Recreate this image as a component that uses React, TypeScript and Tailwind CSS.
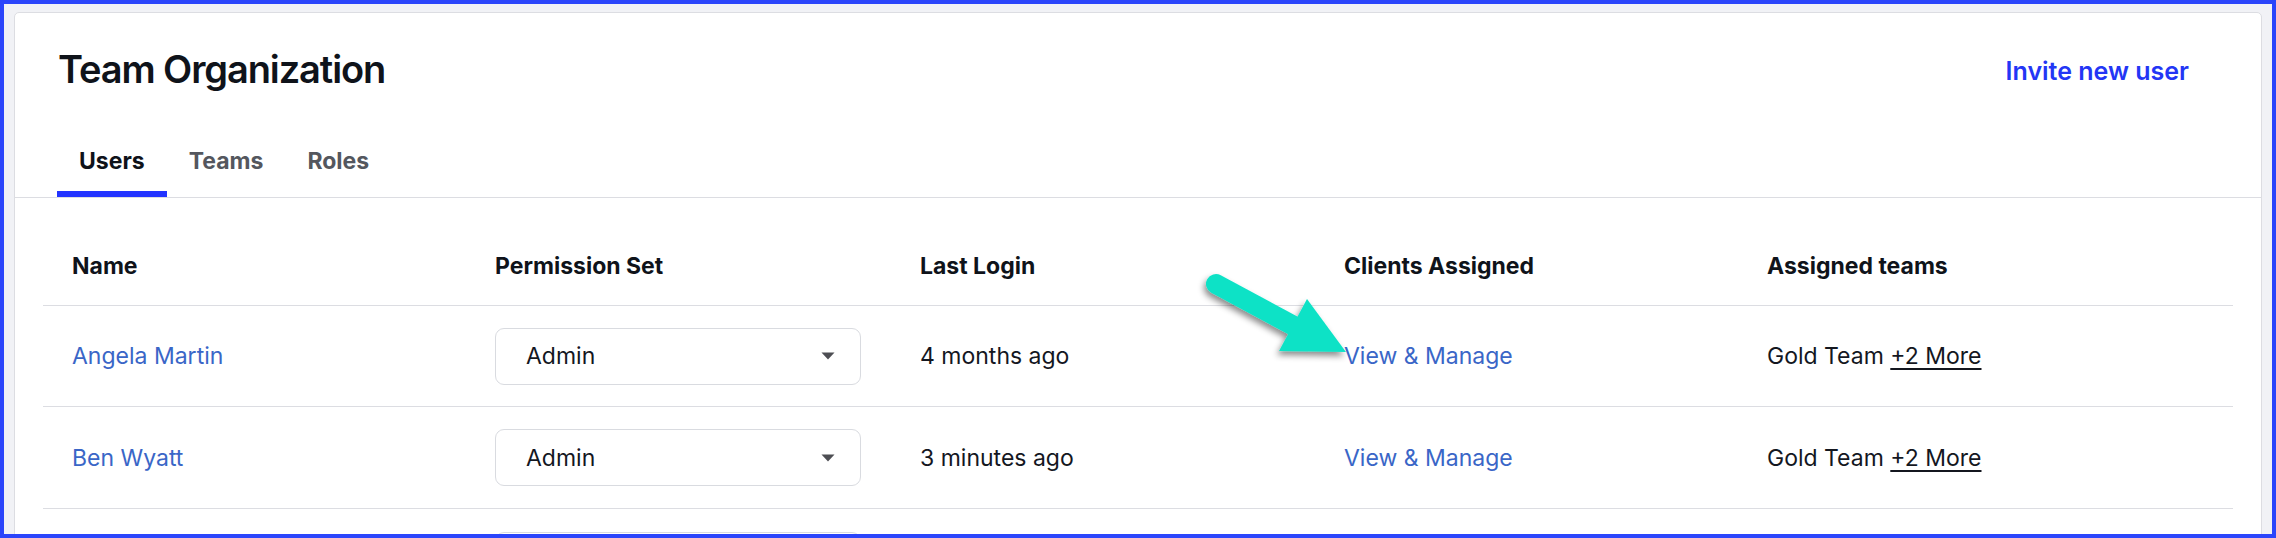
import * as React from "react";

const rows = [
  { name: "Angela Martin", role: "Admin", login: "4 months ago", h: "h-[101px]" },
  { name: "Ben Wyatt", role: "Admin", login: "3 minutes ago", h: "h-[102px]" },
];

const cols = "grid grid-cols-[425px_423px_424px_423px_1fr]";

function Caret() {
  return (
    <svg width="14" height="8" viewBox="0 0 14 8">
      <path d="M0.5 0.5 L13.5 0.5 L7 7.5 Z" fill="#4d4e53" />
    </svg>
  );
}

function Arrow() {
  return (
    <svg
      className="absolute left-[1186px] top-[256px] pointer-events-none"
      width="180"
      height="120"
      viewBox="-4 -4 180 120"
    >
      <defs>
        <filter id="arrowShadow" x="-20%" y="-20%" width="150%" height="150%">
          <feDropShadow dx="-2" dy="4" stdDeviation="3" floodColor="#000" floodOpacity="0.45" />
        </filter>
      </defs>
      <g filter="url(#arrowShadow)" fill="#10e2c6">
        <line x1="22" y1="20" x2="100" y2="62" stroke="#10e2c6" strokeWidth="20" strokeLinecap="round" />
        <path d="M113 35 L152 88 L85 87 Z" />
      </g>
    </svg>
  );
}

export default function App() {
  return (
    <div
      className="relative w-[2276px] h-[538px] overflow-hidden border-4 border-[#2b45fb] bg-[#f1f2f6] pt-[8px] px-[10px]"
      style={{ fontFamily: "Inter, 'Noto Sans', sans-serif" }}
    >
      <div className="h-[600px] bg-white border border-[#dcdde2] rounded-t-[5px]">
        {/* Header */}
        <div className="flex justify-between items-start pt-[33px] pl-[43px] pr-[72px]">
          <h1 className="text-[38px] leading-[46px] font-semibold tracking-[-1.1px] text-[#0f131a]">Team Organization</h1>
          <a className="mt-[10px] text-[25px] leading-[30px] font-semibold text-[#2336f5]">Invite new user</a>
        </div>

        {/* Tabs */}
        <div className="mt-[55px] flex pl-[42px] border-b border-[#dcdde2]">
          <div className="px-[22px] pb-[16px] text-[23px] leading-[28px] font-bold text-[#0f131a] border-b-[6px] border-[#2233ff]">
            Users
          </div>
          <div className="px-[22px] pb-[16px] text-[23px] leading-[28px] font-bold text-[#54575e] border-b-[6px] border-transparent">
            Teams
          </div>
          <div className="px-[22px] pb-[16px] text-[23px] leading-[28px] font-bold text-[#54575e] border-b-[6px] border-transparent">
            Roles
          </div>
        </div>

        {/* Table */}
        <div className="pt-[28px] px-[28px] text-[23px] leading-[28px]">
          <div className={`${cols} h-[80px] items-center border-b border-[#dcdde2] font-bold text-[#0f131a]`}>
            <div className="pl-[29px]">Name</div>
            <div className="pl-[27px]">Permission Set</div>
            <div className="pl-[29px]">Last Login</div>
            <div className="pl-[29px]">Clients Assigned</div>
            <div className="pl-[29px]">Assigned teams</div>
          </div>
          {rows.map((r) => (
            <div key={r.name} className={`${cols} ${r.h} items-center border-b border-[#dcdde2] text-[#14171f]`}>
              <div className="pl-[29px] text-[#3a66c7]">{r.name}</div>
              <div className="pl-[27px]">
                <div className="w-[366px] h-[57px] flex items-center justify-between border border-[#d9dbe0] rounded-[9px] pl-[30px] pr-[25px]">
                  <span>{r.role}</span>
                  <Caret />
                </div>
              </div>
              <div className="pl-[29px]">{r.login}</div>
              <div className="pl-[29px] text-[#3a66c7]">View &amp; Manage</div>
              <div className="pl-[29px]">
                Gold Team <span className="underline underline-offset-[4px] decoration-[2px]">+2 More</span>
              </div>
            </div>
          ))}
          {/* next row, only its select shows above the fold */}
          <div className={`${cols} h-[102px] items-center`}>
            <div />
            <div className="pl-[27px]">
              <div className="w-[366px] h-[57px] border border-[#d9dbe0] rounded-[9px]" />
            </div>
          </div>
        </div>
      </div>
      <Arrow />
    </div>
  );
}
